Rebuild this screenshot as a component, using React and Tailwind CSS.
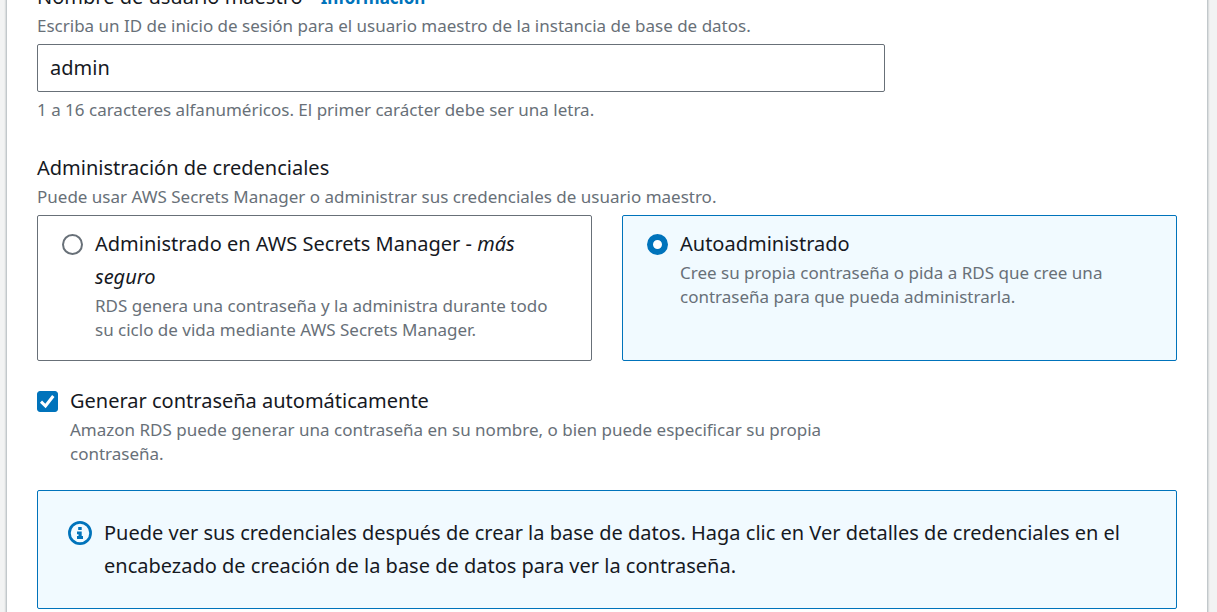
import { useState } from "react";

const hint = "text-[17px] leading-6 text-[#687078]";
const label = "pb-px text-[20px] leading-[33px] text-[#16191f]";

function Tile({ id, checked, onSelect, title, children }) {
  return (
    <label
      htmlFor={id}
      className={
        "flex flex-1 gap-3 rounded-[2px] border px-6 pt-[11px] pb-[18px] " +
        (checked ? "border-[#0073bb] bg-[#f1faff]" : "border-[#687078] bg-white")
      }
    >
      <input
        id={id}
        type="radio"
        name="credentials"
        checked={checked}
        onChange={onSelect}
        className="mt-[7px] size-[21px] shrink-0 appearance-none rounded-full border-2 border-[#687078] bg-white checked:border-[6px] checked:border-[#0073bb]"
      />
      <span className="block min-w-0">
        <span className={"block " + label}>{title}</span>
        <span className={"block " + hint}>{children}</span>
      </span>
    </label>
  );
}

export default function App() {
  const [user, setUser] = useState("admin");
  const [mode, setMode] = useState("self");
  const [auto, setAuto] = useState(true);

  return (
    <div className="h-screen overflow-hidden bg-[#f2f3f3] pr-[9px] pl-[6px] font-['Noto_Sans','Open_Sans',sans-serif]">
      <main className="min-h-screen border-x border-[#c2c8cb] bg-white px-[30px] pb-8 shadow-[0_1px_2px_rgba(0,28,36,0.3)]">
        <section className="-mt-5 w-[calc(75%-7px)]">
          <div className="flex items-baseline gap-[18px]">
            <label htmlFor="user" className={label}>Nombre de usuario maestro</label>
            <a href="#info" className="text-[17px] leading-6 font-bold text-[#0073bb]">Información</a>
          </div>
          <p className={hint}>Escriba un ID de inicio de sesión para el usuario maestro de la instancia de base de datos.</p>
          <input
            id="user"
            type="text"
            value={user}
            onChange={(e) => setUser(e.target.value)}
            className="my-[6px] block h-12 w-full rounded-[2px] border border-[#687078] bg-white px-3 pb-[2px] text-[20px] text-[#16191f] outline-none"
          />
          <p className={hint}>1 a 16 caracteres alfanuméricos. El primer carácter debe ser una letra.</p>
        </section>

        <fieldset className="mt-[29px]">
          <legend className={label}>Administración de credenciales</legend>
          <p className={hint}>Puede usar AWS Secrets Manager o administrar sus credenciales de usuario maestro.</p>
          <div className="mt-[6px] flex gap-[30px]">
            <Tile
              id="managed"
              checked={mode === "managed"}
              onSelect={() => setMode("managed")}
              title={<>Administrado en AWS Secrets Manager - <em>más seguro</em></>}
            >
              RDS genera una contraseña y la administra durante todo su ciclo de vida mediante AWS Secrets Manager.
            </Tile>
            <Tile id="self" checked={mode === "self"} onSelect={() => setMode("self")} title="Autoadministrado">
              Cree su propia contraseña o pida a RDS que cree una contraseña para que pueda administrarla.
            </Tile>
          </div>
        </fieldset>

        <section className="mt-[23px] flex w-[calc(75%-7px)] gap-3">
          <span className="mt-[7px] grid size-[21px] shrink-0">
            <input
              id="auto"
              type="checkbox"
              checked={auto}
              onChange={(e) => setAuto(e.target.checked)}
              className="col-start-1 row-start-1 size-[21px] appearance-none rounded-[3px] border border-[#687078] bg-white checked:border-[#0073bb] checked:bg-[#0073bb]"
            />
            {auto && (
              <svg viewBox="0 0 21 21" className="pointer-events-none col-start-1 row-start-1 size-[21px]" fill="none" stroke="#fff" strokeWidth="3" aria-hidden="true">
                <path d="M4 10.700 8.500 15 16.300 5" />
              </svg>
            )}
          </span>
          <label htmlFor="auto" className="block min-w-0">
            <span className={"block " + label}>Generar contraseña automáticamente</span>
            <span className={"block " + hint}>
              Amazon RDS puede generar una contraseña en su nombre, o bien puede especificar su propia contraseña.
            </span>
          </label>
        </section>

        <div className="mt-6 flex gap-3 rounded-[2px] border border-[#0073bb] bg-[#f1faff] px-[30px] py-[25px]">
          <svg viewBox="0 0 24 24" className="mt-[5px] size-6 shrink-0" aria-hidden="true">
            <circle cx="12" cy="12" r="10.600" fill="none" stroke="#0073bb" strokeWidth="2.700" />
            <path fill="#0073bb" d="M10.200 6h3.500v3h-3.500zM9 10.500h4.700V15H15v3H9v-3h1.500v-1.800H9z" />
          </svg>
          <p className={label}>
            Puede ver sus credenciales después de crear la base de datos. Haga clic en Ver detalles de credenciales en el encabezado de creación de la base de datos para ver la contraseña.
          </p>
        </div>
      </main>
    </div>
  );
}
